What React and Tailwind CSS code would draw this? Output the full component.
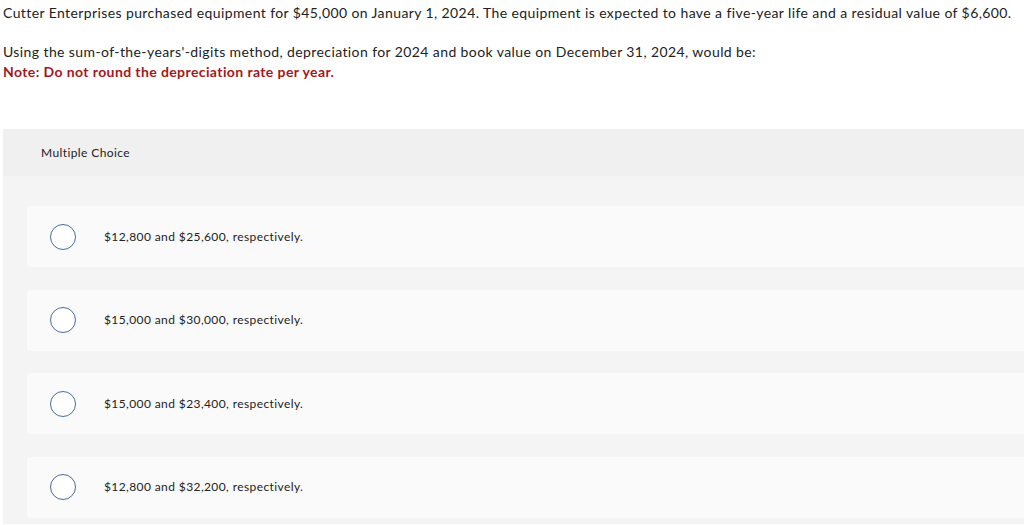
import React from "react";

const choices = [
  "$12,800 and $25,600, respectively.",
  "$15,000 and $30,000, respectively.",
  "$15,000 and $23,400, respectively.",
  "$12,800 and $32,200, respectively.",
];

const App = () => {
  return (
    <div className="min-h-screen bg-white pl-[3px] font-['Lato',sans-serif] text-[#222] tracking-[0.4px]">
      {/* question text */}
      <div className="pt-[3px] text-[14px] leading-[20px]">
        <p>
          Cutter Enterprises purchased equipment for $45,000 on January 1, 2024. The equipment is expected to have a five-year life and a residual value of $6,600.
        </p>
        <p className="mt-[19px]">
          Using the sum-of-the-years'-digits method, depreciation for 2024 and book value on December 31, 2024, would be:
        </p>
        <p className="font-bold text-[#a3171d]">Note: Do not round the depreciation rate per year.</p>
      </div>

      {/* answers panel */}
      <div className="mt-[47px] rounded-tl-[3px] bg-[#f4f4f4]">
        <div className="flex h-[47px] items-center bg-[#f0f0f0] pl-[38px] text-[12px]">Multiple Choice</div>
        <div className="flex flex-col gap-[22.6px] pl-[24px] pt-[30px] pb-[6px]">
          {choices.map((c, i) => (
            <div key={i} className="flex h-[61px] items-center rounded-l-[3px] bg-[#fafafa]">
              <span className="ml-[23px] h-[26px] w-[26px] shrink-0 rounded-full border border-[#4a6aa0] bg-white"></span>
              <span className="ml-[28px] text-[12px]">{c}</span>
            </div>
          ))}
        </div>
      </div>
    </div>
  );
};

export default App;
